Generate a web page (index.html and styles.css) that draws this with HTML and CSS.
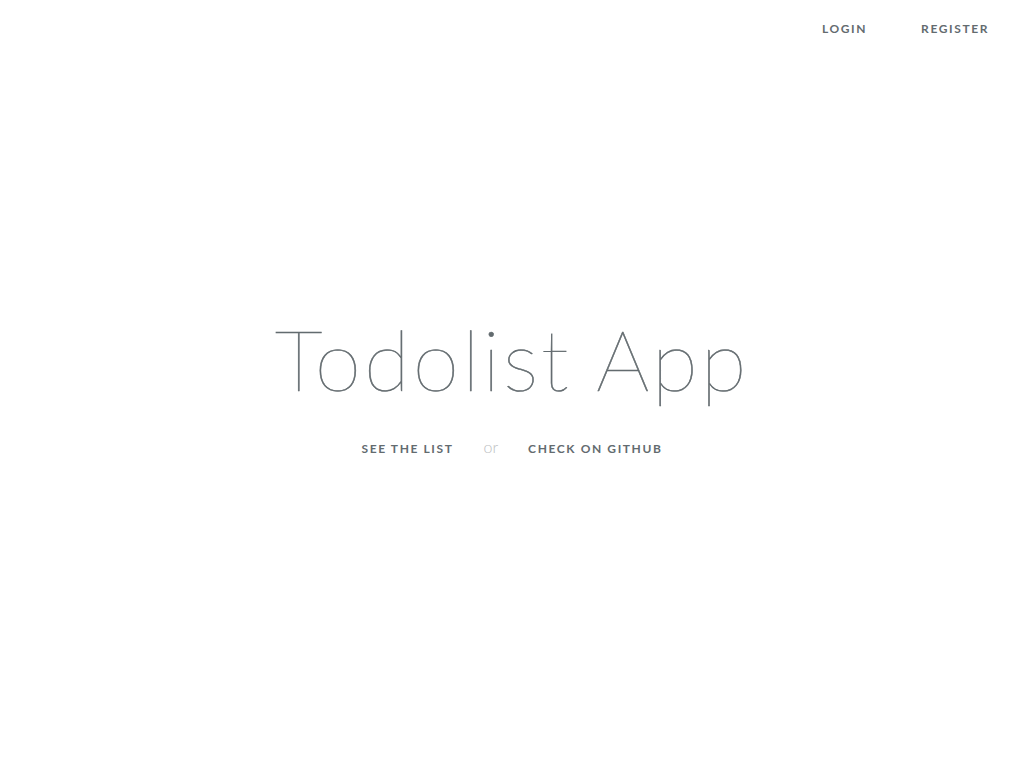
FILE: index.html
```html
<!DOCTYPE html>
<html lang="en">
<head>
<meta charset="utf-8">
<title>Todolist App</title>
<link rel="stylesheet" href="styles.css">
</head>
<body>
<div class="page">
  <header class="top-links">
    <a class="link" href="#">Login</a>
    <a class="link" href="#">Register</a>
  </header>
  <main class="content">
    <h1 class="title">Todolist App</h1>
    <nav class="links">
      <a class="link" href="#">See the list</a>
      <span class="or">or</span>
      <a class="link" href="#">Check on Github</a>
    </nav>
  </main>
</div>
</body>
</html>
```

FILE: styles.css
```css
html, body {
  margin: 0;
  padding: 0;
  background: #fff;
  color: #636b6f;
  font-family: "Lato", "Liberation Sans", sans-serif;
}
.page {
  height: 100vh;
  display: flex;
  flex-direction: column;
}
.top-links {
  display: flex;
  justify-content: flex-end;
  padding: 22px 10px 0 0;
  height: 34px;
  box-sizing: border-box;
}
.link {
  color: #636b6f;
  text-decoration: none;
  text-transform: uppercase;
  font-family: "Lato", "Liberation Sans", sans-serif;
  font-size: 12px;
  font-weight: 700;
  letter-spacing: 1.6px;
  line-height: 14px;
  padding: 0 25px;
}
.top-links .link + .link {
  margin-left: 4px;
}
.content {
  flex: 1;
  display: flex;
  flex-direction: column;
  align-items: center;
  justify-content: center;
  padding-bottom: 38px;
}
.title {
  margin: 0 0 28px;
  font-family: "Lato", sans-serif;
  font-weight: 100;
  font-size: 84px;
  line-height: 100px;
  letter-spacing: 3px;
  color: #636b6f;
  -webkit-text-stroke: 0.6px #636b6f;
}
.links {
  display: flex;
  align-items: baseline;
}
.or {
  font-family: "Lato", sans-serif;
  font-weight: 300;
  font-size: 16px;
  color: #bdc0c2;
  padding: 0 5px;
}
```
